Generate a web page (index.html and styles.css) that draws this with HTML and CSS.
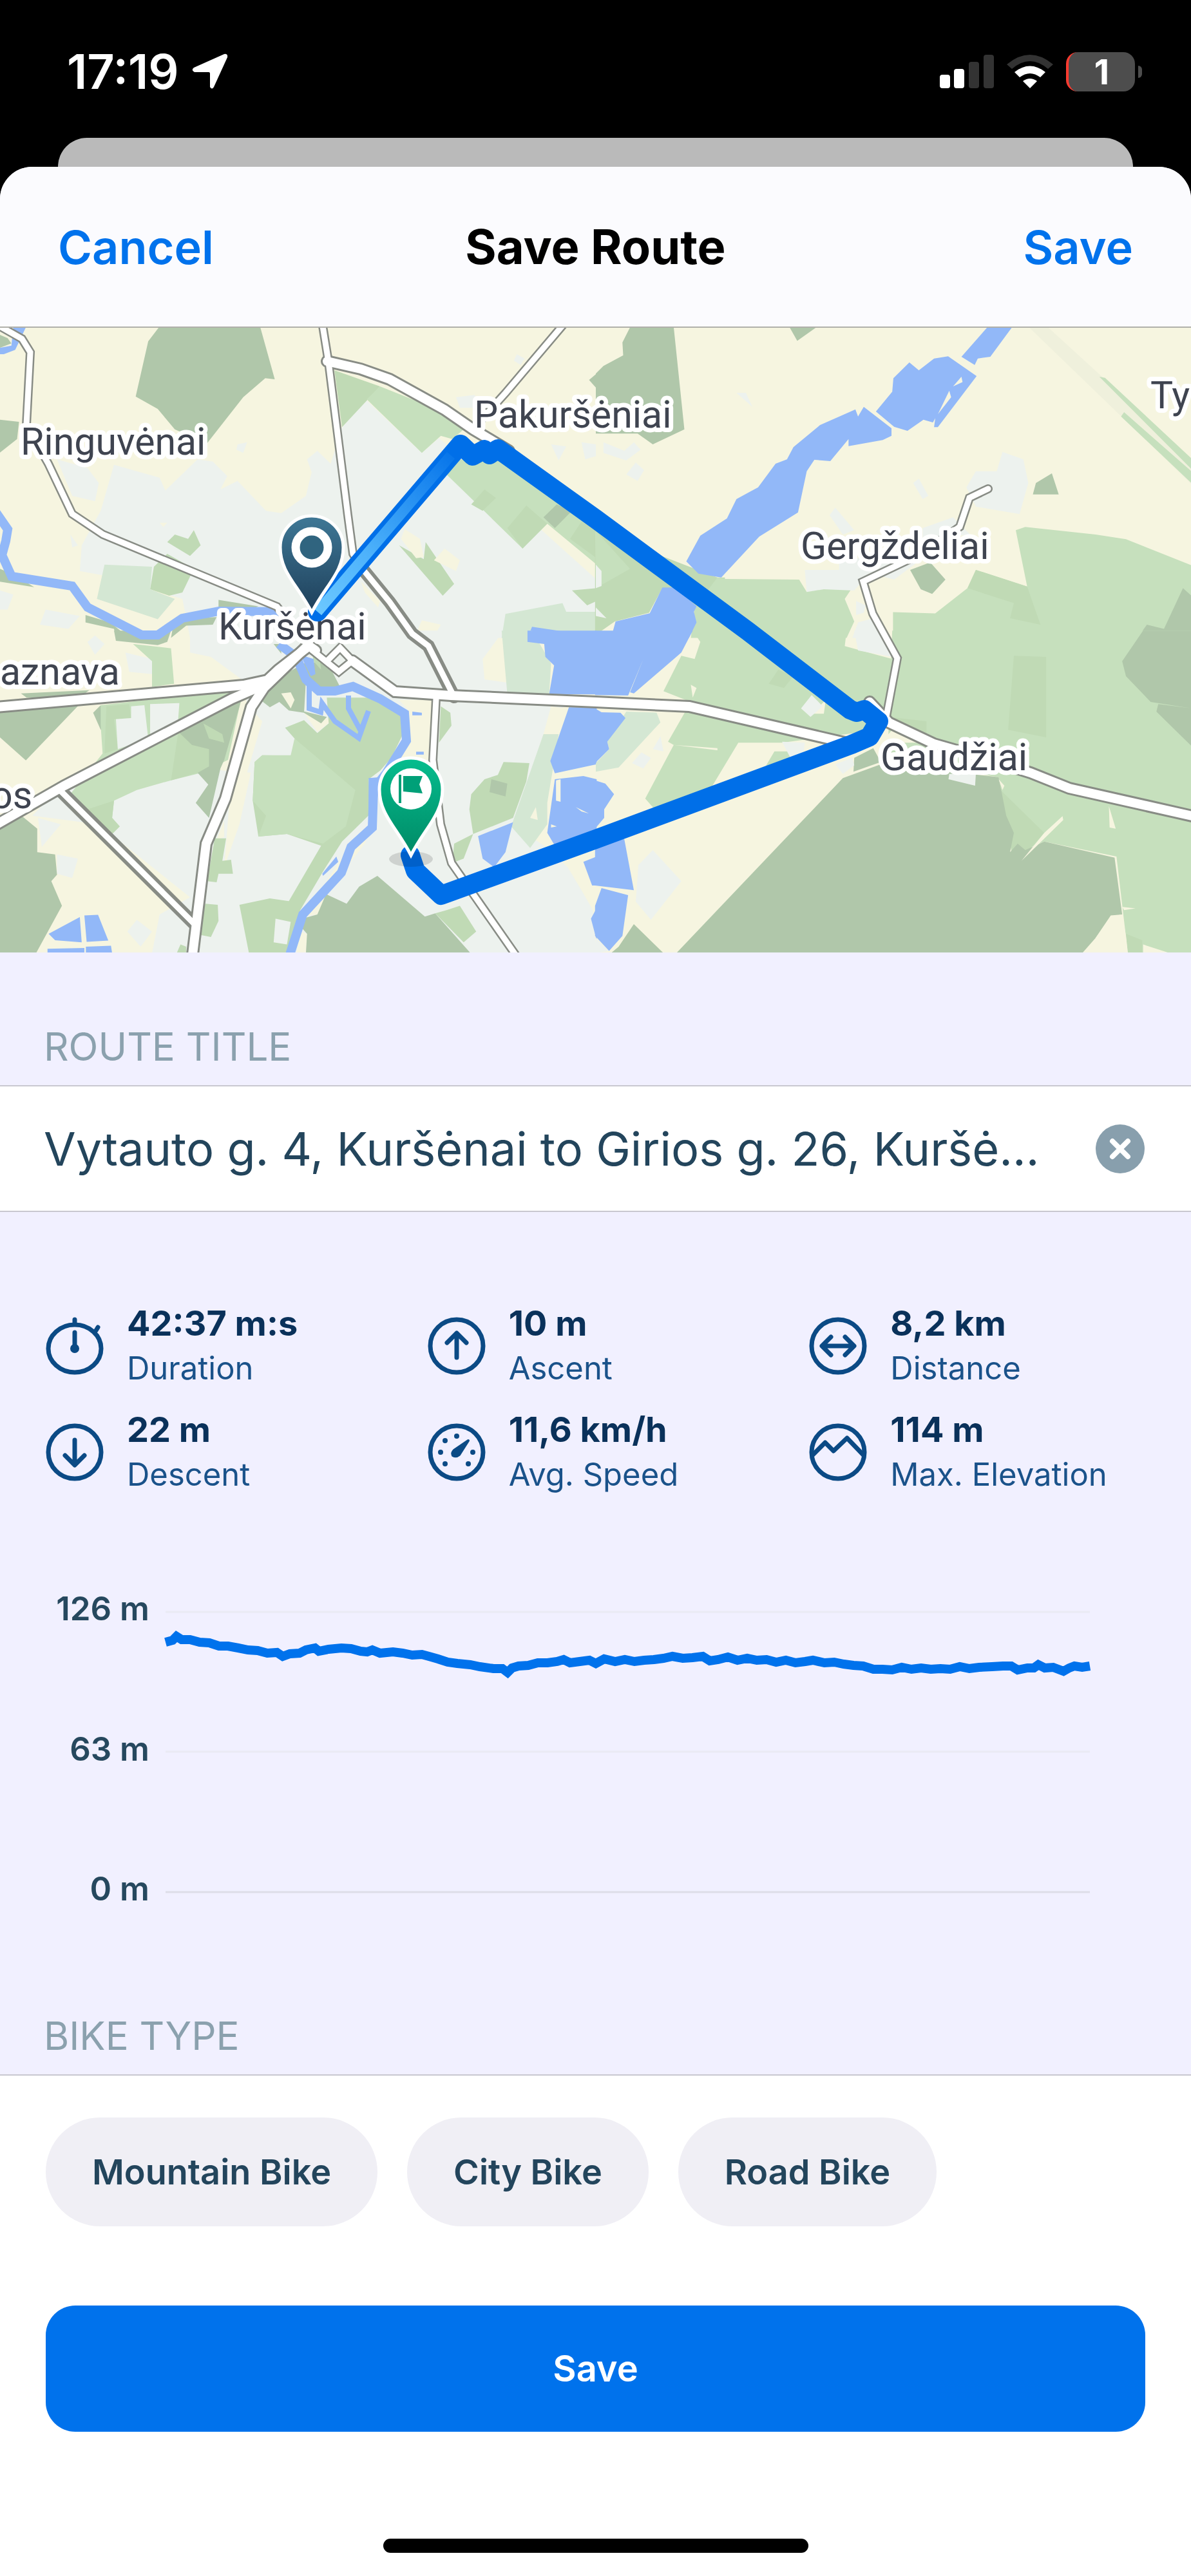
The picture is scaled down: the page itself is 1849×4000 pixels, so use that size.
FILE: index.html
```html
<!DOCTYPE html>
<html lang="en">
<head>
    <meta charset="UTF-8">
    <meta name="viewport" content="width=device-width, initial-scale=1.0">
    <title>Save Route</title>
    <link rel="stylesheet" href="styles.css">
</head>
<body>

    <div class="status-bar">
        <div class="status-left">
            <span class="clock">17:19</span>
            <svg class="location-icon" viewBox="0 0 56 56" width="56" height="56"><path d="M50 1 Q56 0 55 6 L34 52 Q31 57 28 52 V31 Q28 29 26 29 H4 Q-2 26 3 22 Z" fill="#fff"/></svg>
        </div>
        <div class="status-right">
            <svg viewBox="0 0 84 52" width="84" height="52">
                <rect x="0" y="31" width="16" height="21" rx="4" fill="#fff"/>
                <rect x="22" y="22" width="16" height="30" rx="4" fill="#fff"/>
                <rect x="45" y="11" width="16" height="41" rx="4" fill="#333"/>
                <rect x="68" y="0" width="16" height="52" rx="4" fill="#333"/>
            </svg>
            <svg viewBox="0 0 72 52" width="72" height="52">
                <path d="M0 15 Q36 -15 72 15 L64 22 Q36 -2 8 22 Z" fill="#333"/>
                <path d="M12 27 Q36 8 60 27 L52 35 Q36 23 20 35 Z" fill="#fff"/>
                <path d="M25 41 Q36 33 47 41 L36 52 Z" fill="#fff"/>
            </svg>
            <div class="battery"><span class="battery-level">1</span></div>
        </div>
    </div>

    <div class="back-sheet"></div>

    <div class="sheet">
        <header class="nav">
            <button class="nav-button" type="button">Cancel</button>
            <h1>Save Route</h1>
            <button class="nav-button nav-save" type="button">Save</button>
        </header>

        <svg class="map" viewBox="0 509 1849 970" role="img" aria-label="Route map">
            <defs>
                <linearGradient id="leg" gradientUnits="userSpaceOnUse" x1="493" y1="950" x2="715" y2="690">
                    <stop offset="0" stop-color="#6cc8ff"/>
                    <stop offset=".35" stop-color="#4db2fb"/>
                    <stop offset="1" stop-color="#006fe8"/>
                </linearGradient>
                <linearGradient id="startPin" x1="0" y1="0" x2="0" y2="1">
                    <stop offset="0" stop-color="#3f7896"/>
                    <stop offset="1" stop-color="#1e3f5a"/>
                </linearGradient>
                <linearGradient id="endPin" x1="0" y1="0" x2="0" y2="1">
                    <stop offset="0" stop-color="#05bd8e"/>
                    <stop offset="1" stop-color="#008a66"/>
                </linearGradient>
            </defs>
            <rect class="land" x="0" y="509" width="1849" height="970"/>

            <!-- north west -->
            <g transform="translate(0 500) scale(.59 .3333)">
                <path class="urban" d="M300 665 420 725 435 785 520 640 560 650 598 718 580 780 625 740 700 880 740 890 805 810 820 700 808 640 835 600 870 660 900 490 965 365 1110 610 1155 540 1570 1200V1472H500L480 1290 270 1180 210 1160 215 1040 265 880Z"/>
                <path class="urban" d="M150 640 230 680 260 750 250 835 190 810ZM625 570 650 560 640 610 622 595ZM1200 350 1250 340V400H1210ZM1360 150 1380 170 1370 200 1352 180ZM1450 570 1490 580 1470 645ZM1530 560 1568 570V625L1540 640ZM185 990 205 1040 190 1050ZM120 1340 210 1370 180 1430 105 1410ZM0 1250 35 1270 20 1340H0Z"/>
                <path class="forest" d="M418 25H685L723 267 698 262 640 350 545 565 460 500 415 405 357 347 390 90ZM0 455 50 465 45 545 0 608ZM0 60 20 75 30 100 0 120ZM1570 240 1550 270 1570 310ZM0 1150 40 1180 90 1235 0 1210ZM575 1295 680 1325 650 1345H575ZM225 1365 290 1400 340 1472H305L300 1430 225 1400ZM450 1472 455 1420 480 1380 570 1375 560 1410 490 1415Z"/>
                <path class="field" d="M880 225 1000 300 900 490ZM440 1025 460 990 495 1010 510 970 528 1040 500 1090ZM405 1140 440 1080 510 1150 480 1260 445 1275 395 1245ZM1050 1040 1115 1105 1120 1025 1195 1220 1165 1275ZM1505 1250 1570 1240V1300L1545 1320Z"/>
                <path class="meadow" d="M1000 300 1240 470 1190 545 1160 530 1110 610 965 360ZM1175 710 1210 640 1310 640 1570 970V1130L1440 940 1375 1055Z"/>
                <path class="field" d="M1335 960 1385 855 1440 940 1375 1055ZM1240 850 1275 780 1305 820 1270 880ZM1500 1010 1530 930 1570 970V1100Z"/>
                <path class="forest" d="M1430 910 1465 850 1505 880 1460 960Z"/>
                <path class="park" d="M275 1130 400 1140 395 1245 460 1290 415 1385 255 1290ZM1330 1360 1480 1310 1490 1350 1570 1350V1472H1320Z"/>
                <path class="land" d="M1065 965 1105 1010 1115 1095 1095 1100 1055 1010ZM1170 1055 1210 1110 1200 1160 1142 1110ZM950 1210 1000 1300 995 1330 960 1260ZM420 935 440 935 430 955ZM1110 1390 1160 1410 1140 1472H1090ZM465 1350 560 1360 500 1385Z"/>
                <path class="water" d="M0 120 30 110 35 25H68L40 130 10 150H0ZM1400 1420 1570 1465V1472H1388Z"/>
            </g>

            <!-- north east -->
            <g transform="translate(925 500) scale(.59 .3333)">
                <path class="runway" d="M1140 25H1190L1570 640V760Z"/>
                <path class="urban" d="M1070 605 1125 640 1138 750 1115 895 1000 860 975 770 1000 695 1055 695ZM550 1155H640V1100H860L785 1200 720 1170 680 1250 555 1260ZM630 865 680 970 650 990 615 900ZM850 730 875 810 860 825 835 750ZM370 330 395 330 412 395ZM860 960 940 910 985 990 860 1010ZM20 560 75 600 100 560 118 595 80 645 20 610ZM105 655 127 690 110 740 80 710ZM675 1472 690 1400 730 1380 770 1472ZM685 1300 710 1320 705 1355 685 1365Z"/>
                <path class="forest" d="M90 25H205L233 500 150 570 110 520H0V240L20 205 72 155 70 95ZM510 25H580L530 88ZM1200 705 1218 803H1150L1158 750ZM827 1155 880 1120 920 1200 885 1267 855 1245Z"/>
                <path class="field" d="M-2 970 320 1190H340L330 1300 260 1330 175 1240 140 1355 50 1395-2 1460Z"/>
                <path class="meadow" d="M1325 255 1340 260 1570 640V690ZM1382 440 1390 420 1570 700V755ZM-2 970 90 1150 0 1240ZM340 1197 535 1200 555 1258 600 1245 670 1250 655 1290 680 1395 660 1472H250L260 1330 320 1190ZM782 1352 893 1358 978 1240 1000 1155 1135 1232 1105 970 1130 955 1315 990 1395 1012 1570 1135V1472H782Z"/>
                <path class="field" d="M1000 1155 1135 1232 1170 1410 1090 1380 1100 1310 978 1240Z"/>
                <path class="forest" d="M1545 1240 1570 1280V1472H1425L1450 1410 1495 1430Z"/>
                <path class="urban" d="M0 1130 15 1160V1230L0 1240ZM0 1330 28 1380 0 1370Z"/>
                <path class="water" d="M1030 25H1095L1038 162 1005 170 997 200 962 162ZM737 417 780 325 783 262 825 188 850 225 890 170 927 160 1002 252 900 490H890L895 425 930 330 887 468 862 455 820 507 785 488ZM705 395 778 495V530L755 550 665 578V545L617 648 575 642 555 695 532 887 430 1000 330 1190 270 1172 238 1115 275 995 345 915 370 825 427 770 473 660 503 640 520 583 590 480 683 407 690 440ZM175 1237H210L265 1325 258 1350 265 1400 245 1472H-2L45 1440 52 1395 142 1357Z"/>
                <path class="land" d="M962 255 965 280 940 300ZM930 320 935 350 900 430Z"/>
            </g>

            <!-- south west -->
            <g transform="translate(0 980) scale(.59 .3333)">
                <path class="urban" d="M500-2H1325L1270 130 1275 225 1335 240V300L1500 310 1430 480 1350 900 1440 1010 1500 1110 1560 1300 1570 1500H400L420 1320 500 1240 260 900 130 870 85 860 150 740 300 600 650 660 690 420 650 340 640 230 555 120 500 100ZM330 100 400 130V200L340 190ZM230 50 250 20 275 60 250 110ZM150 1040 205 1060 190 1150 150 1130ZM100 870 160 900 110 1005ZM360 1345 400 1400 370 1470 335 1400Z"/>
                <path class="land" d="M1050 320H1150L1140 600H1050L1080 500 1075 370ZM930 970 975 900 960 990 860 1220 835 1320 800 1330ZM610 650 660 660 630 900 590 1100ZM590 880V960L570 970ZM790 1400 808 1410 805 1500H780ZM800 380 835 470 870 420 855 400Z"/>
                <path class="forest" d="M0 370 210 340 68 602 0 495ZM55 290 235 275 200 320 70 310ZM0 880 60 865 98 920V1030L145 1040 150 1135 135 1165 163 1280 95 1500H0ZM300-2H450L440 50 415 65 305 45ZM245 380 265 345 285 430 265 460Z"/>
                <path class="meadow" d="M350 60 450 80 458 245 400 260 400 140ZM265 345 640 270 600 600 530 660 450 695 360 740 300 790 295 870 315 910 295 945 180 770 270 570 265 440Z"/>
                <path class="field" d="M470 460 560 330 550 630 520 660 450 695ZM280 350 340 340 345 405 300 410 310 550 275 570ZM230 830 300 790 295 870 315 910 295 945 260 880Z"/>
                <path class="urban" d="M305 410 345 405 345 350 380 345 390 500 310 550ZM395 340 472 335 468 430 395 490Z"/>
                <path class="forest" d="M560 330 640 290 590 600 580 640 550 870 515 800 548 715 520 660 550 630V550L505 530 470 470 530 400ZM700 250 800 150 860 140 895 260 860 290 805 230 800 380 760 370 735 330 710 355 685 320ZM790 370 860 400 845 430ZM720 60 740 60 740 105Z"/>
                <path class="field" d="M535 430 585 480 590 520 550 500ZM820 90 840 110 845 180 825 140ZM800 415 835 475 865 430 860 310H1000L1055 390 1060 480 1030 590 1000 650 970 690 975 850 900 980 850 1120 790 1300 760 1500H655L630 1275 710 1245 760 1258 845 1000 755 945 680 957 665 790 670 610 690 578 765 580 780 510 750 450Z"/>
                <path class="meadow" d="M775 500 935 740 910 910 850 990 755 945 680 957 700 860 665 790 670 610 690 578H765Z"/>
                <path class="land" d="M740 290 765 285 775 320 765 360Z"/>
                <path class="urban" d="M725 1340 765 1355 755 1460 720 1450Z"/>
                <path class="field" d="M565 965H595L585 1070 608 1065 613 1130 575 1130 570 1170 545 1165ZM540 1270 573 1275 575 1350 555 1425 525 1415ZM475 1460 490 1470V1500H465ZM1145 1315 1175 1300 1210 1280 1253 1400 1220 1450ZM1325 610 1393 615 1385 700 1350 870 1245 945 1220 1060 1190 1080 1195 990 1245 945 1235 830 1240 760 1275 690 1310 670ZM1160 350 1185 380 1188 440 1155 520Z"/>
                <path class="forest" d="M993 1140 1118 1330 1145 1315 1238 1500H805L808 1410 790 1375 795 1340 835 1320 858 1225 912 1270 945 1190ZM1293 690 1335 710 1330 770 1288 750Z"/>
                <path class="park" d="M1430 480H1470L1440 800 1440 900 1395 1010 1345 910ZM1320-2H1400L1450 150 1445 295H1335Z"/>
                <path class="land" d="M1410 820 1415 880 1395 870ZM1490 360 1455 480 1430 480 1450 350ZM1460 1000 1535 975 1535 1120 1558 1290Z"/>
                <path class="water" d="M1258 955 1350 890 1330 1030 1300 1100 1270 1060ZM1388-2H1570V295L1445 293 1458 160 1435 120 1432 60 1388 50ZM1497 355H1570V620L1460 662 1448 605ZM1460 690 1535 675 1570 690V960L1460 1000 1440 940ZM1535 1075 1570 1050V1185H1558ZM1570 1290V1440L1555 1340ZM128 1410 210 1332 215 1450 145 1440ZM222 1325 258 1322 285 1442 228 1448ZM125 1480 222 1476V1500H125ZM226 1470 292 1466 295 1500H226ZM970 685 1000 680 990 820 970 900ZM790 110 825 130 830 200 818 210ZM848 1130 885 1050 890 1075 850 1140ZM1085 375 1110 380V392H1085ZM1095 562H1115V575H1095Z"/>
                <path class="land" d="M1463 695 1475 690 1475 795 1463 790ZM1450 900 1465 910 1450 915ZM1515 820 1550 850 1530 840Z"/>
            </g>

            <!-- south east -->
            <g transform="translate(925 980) scale(.59 .3333)">
                <path class="meadow" d="M255-2H660L655 70 780 130 760 400 700 470 490 520H375L300 740 155 830 130 780 205 530 190 515 250 330 178 280 225 115 260 130 275 50ZM780-2H1570V1500H1400L1370 1050 1180 980 1100 1040 1075 830 1060 680 770 600V400ZM470 560 510 560 530 600 440 650Z"/>
                <path class="field" d="M1100 115 1185 120V495L1085 460ZM770 400 870 420V500L780 470ZM480 180 520 210 495 265 455 245ZM1065 740 1180 940 1120 1060 1095 1040ZM1395 1410 1438 1440V1500H1400Z"/>
                <path class="forest" d="M1440-2H1570V360L1460 330 1395 210 1385 140ZM1480 340 1570 360V540L1475 375ZM650 685 750 620 1060 680 1080 860 1100 940 1090 1030 1110 990 1130 1020 1180 980 1365 1055 1385 1320 1355 1330 1315 1430 1280 1500H212ZM680 590 730 545 750 610 678 655ZM100 1365 178 1500H40L60 1470Z"/>
                <path class="land" d="M1385 1320 1395 1420 1400 1500H1320L1315 1430 1355 1325ZM1440 1460 1510 1500H1440ZM1228 862 1230 880 1120 1070 1180 940ZM1350 815 1368 920 1352 915ZM1060 690 1075 720 1070 740ZM780 460 870 520 750 520ZM250 250 265 265 255 310ZM605 320 600 385 570 385 540 440ZM205 530 320 545 320 555ZM1385 1285 1420 1292 1390 1300Z"/>
                <path class="urban" d="M930 665H1000L998 720 928 690ZM540 360 568 298 597 350 565 400ZM490 515 550 520 545 580 512 590ZM150 1020 225 1165 145 1345 105 1260 112 1090ZM680-2H755L780 120 690 90ZM120 565 145 590 125 640 95 615ZM170 490 178 560 150 550ZM630 620 675 590 680 625 650 665ZM0 1430 35 1490 0 1500Z"/>
                <path class="park" d="M80 375 160 380 170 425 60 635 0 655V615L35 550 30 515Z"/>
                <path class="water" d="M-2-2H255L225 100 100 290 90 285 125 130 85 300-2 298ZM-2 360 15 378 65 380 78 405 30 515 35 550-2 615ZM-2 695 25 710 48 760 22 830V870L-2 920ZM-2 940 75 970 100 1207-2 1185ZM15 1197 85 1230 70 1420 35 1490-2 1420V1280Z"/>
            </g>

            <!-- river -->
            <path class="river" d="M-6 796 12 822 9 840 3 862 18 895 112 910 136 943 220 986H245L283 960 340 949 440 950"/>
            <path class="river" d="M433 1000 460 1020 475 1055 495 1073H520L548 1066 590 1085 628 1108 631 1150 600 1200 580 1225 578 1285 545 1315 530 1355 470 1420 450 1482"/>
            <path class="river thin" d="M480 1060V1100L498 1106 500 1092 520 1120 557 1146 572 1104 560 1135 541 1100V1080"/>

            <!-- roads, casing first -->
            <g class="road-case">
                <path d="M-5 504 34 526 47 547 41 660 75 720 112 798 160 830 430 942 475 998"/>
                <path d="M500 500 510 562 540 800 548 860 560 880 605 935 640 984 665 1003 705 1082"/>
                <path d="M878 500 785 610 740 660"/>
                <path d="M677 1085 672 1180 684 1280 701 1340 800 1482"/>
                <path d="M1534 759 1505 773 1490 818 1430 860 1340 903 1355 953 1393 1022 1375 1118"/>
                <path d="M485 1010 526 1043 547 1026 528 1006 508 1026"/>
            </g>
            <g class="road-case heavy">
                <path d="M560 880 605 935 640 984 665 1003 705 1082"/>
                <path d="M92 1226 303 1436"/>
            </g>
            <g class="road-case wide">
                <path d="M508 561 560 573 605 589 690 636 735 667 790 700"/>
                <path d="M-5 1098 378 1064 415 1056 432 1040 480 1003 490 1010"/>
                <path d="M-5 1280 100 1220 360 1085 395 1070 415 1060"/>
                <path d="M475 1005 410 1068 390 1098 350 1240 320 1310 299 1482"/>
                <path d="M547 1026 613 1074 700 1080 925 1090 1070 1097 1320 1155"/>
                <path d="M1350 1090 1380 1122 1450 1155 1530 1178 1600 1200 1660 1224 1855 1268"/>
            </g>
            <g class="road">
                <path d="M-5 504 34 526 47 547 41 660 75 720 112 798 160 830 430 942 475 998"/>
                <path d="M500 500 510 562 540 800 548 860 560 880 605 935 640 984 665 1003 705 1082"/>
                <path d="M878 500 785 610 740 660"/>
                <path d="M92 1226 303 1436"/>
                <path d="M677 1085 672 1180 684 1280 701 1340 800 1482"/>
                <path d="M1534 759 1505 773 1490 818 1430 860 1340 903 1355 953 1393 1022 1375 1118"/>
                <path d="M485 1010 526 1043 547 1026 528 1006 508 1026"/>
            </g>
            <g class="road wide">
                <path d="M508 561 560 573 605 589 690 636 735 667 790 700"/>
                <path d="M-5 1098 378 1064 415 1056 432 1040 480 1003 490 1010"/>
                <path d="M-5 1280 100 1220 360 1085 395 1070 415 1060"/>
                <path d="M475 1005 410 1068 390 1098 350 1240 320 1310 299 1482"/>
                <path d="M547 1026 613 1074 700 1080 925 1090 1070 1097 1320 1155"/>
                <path d="M1350 1090 1380 1122 1450 1155 1530 1178 1600 1200 1660 1224 1855 1268"/>
            </g>

            <g class="place">
                <text x="32" y="706">Ringuvėnai</text>
                <text x="736" y="664">Pakuršėniai</text>
                <text x="1243" y="868">Gergždeliai</text>
                <text x="1367" y="1196">Gaudžiai</text>
                <text x="339" y="993">Kuršėnai</text>
                <text x="1786" y="634">Ty</text>
                <text x="0" y="1063">aznava</text>
                <text x="-14" y="1255">os</text>
            </g>

            <!-- route -->
            <path class="route" d="M493 950 715 690 734 708 752 698 760 706 773 697 925 806 1161 980 1320 1102 1330 1106 1342 1102 1364 1120 1350 1144 1322 1156 925 1303 685 1390 645 1352 637 1328"/>
            <path d="M493 950 700 707" stroke="url(#leg)" stroke-width="16"/>

            <path d="M484 951C462 908 435 889 435 850A49 49 0 0 1 533 850C533 889 506 908 484 951Z" fill="url(#startPin)" stroke="#fff" stroke-width="5"/>
            <circle cx="484" cy="850" r="25" fill="#30647f" stroke="#fff" stroke-width="13"/>

            <ellipse cx="638" cy="1334" rx="34" ry="12" fill="#000" opacity=".13"/>
            <path d="M638 1328C616 1285 589 1265 589 1226A49 49 0 0 1 687 1226C687 1265 660 1285 638 1328Z" fill="url(#endPin)" stroke="#fff" stroke-width="5"/>
            <circle cx="638" cy="1225" r="32" fill="#fff"/>
            <path d="M619 1203H623V1247H619ZM626 1205H656L651 1218 656 1232 626 1229Z" fill="#00a078"/>
        </svg>

        <form class="route-form">
            <label class="section-title" for="routeTitle">ROUTE TITLE</label>
            <div class="title-row">
                <input type="text" id="routeTitle" value="Vytauto g. 4, Kuršėnai to Girios g. 26, Kuršėnai">
                <button class="clear-button" type="button" aria-label="Clear title">
                    <svg viewBox="0 0 76 76" width="76" height="76"><circle cx="38" cy="38" r="38" fill="#889fad"/><path d="M26 26 50 50M50 26 26 50" stroke="#fff" stroke-width="8" stroke-linecap="round"/></svg>
                </button>
            </div>

            <div class="stats">
                <div class="stat">
                    <svg class="stat-icon" viewBox="0 0 90 90"><ellipse cx="45" cy="49" rx="41" ry="37"/><path d="M45 4V9M78 21 81 16M45 24V46"/><circle class="solid" cx="45" cy="49" r="5"/></svg>
                    <div><strong>42:37 m:s</strong><span>Duration</span></div>
                </div>
                <div class="stat">
                    <svg class="stat-icon" viewBox="0 0 90 90"><circle cx="45" cy="45" r="41"/><path d="M45 63V26M30 40 45 25 60 40"/></svg>
                    <div><strong>10 m</strong><span>Ascent</span></div>
                </div>
                <div class="stat">
                    <svg class="stat-icon" viewBox="0 0 90 90"><circle cx="45" cy="45" r="41"/><path d="M21 45H69M34 31 20 45 34 59M56 31 70 45 56 59"/></svg>
                    <div><strong>8,2 km</strong><span>Distance</span></div>
                </div>
                <div class="stat">
                    <svg class="stat-icon" viewBox="0 0 90 90"><circle cx="45" cy="45" r="41"/><path d="M45 26V64M30 50 45 65 60 50"/></svg>
                    <div><strong>22 m</strong><span>Descent</span></div>
                </div>
                <div class="stat">
                    <svg class="stat-icon" viewBox="0 0 90 90"><circle cx="45" cy="45" r="41"/><path class="solid" d="M63 27 49 49Q44 53 39 50 37 46 41 42Z"/><g class="solid"><circle cx="45" cy="20" r="2"/><circle cx="27" cy="27" r="2"/><circle cx="20" cy="45" r="2"/><circle cx="27" cy="63" r="2"/><circle cx="63" cy="63" r="2"/><circle cx="70" cy="45" r="2"/></g></svg>
                    <div><strong>11,6 km/h</strong><span>Avg. Speed</span></div>
                </div>
                <div class="stat">
                    <svg class="stat-icon" viewBox="0 0 90 90"><circle cx="45" cy="45" r="41"/><path d="M5 50 25 30 38 43 59 23 85 50"/></svg>
                    <div><strong>114 m</strong><span>Max. Elevation</span></div>
                </div>
            </div>

            <svg class="chart" viewBox="0 0 1849 560" role="img" aria-label="Elevation">
                <path d="M257 63H1692M257 280H1692" stroke="#eaeaf4" stroke-width="3"/>
                <path d="M257 498H1692" stroke="#dddde8" stroke-width="3"/>
                <g class="chart-label">
                    <text x="232" y="76">126 m</text>
                    <text x="232" y="294">63 m</text>
                    <text x="232" y="511">0 m</text>
                </g>
                <polyline class="elevation" points="257,110 268,107 274,101 282,106 295,106 310,110 325,111 340,116 354,116 370,119 385,122 400,123 415,127 430,126 439,132 450,128 465,127 475,122 489,119 495,124 510,121 530,119 545,120 560,124 570,125 578,122 590,127 610,125 625,127 640,130 655,129 666,132 680,136 695,141 710,143 730,145 745,148 766,151 780,151 788,157 795,150 805,147 820,146 835,142 850,142 865,140 875,137 885,142 900,140 915,138 925,143 938,136 955,140 970,137 985,140 1000,138 1015,137 1030,135 1044,132 1060,135 1075,134 1091,132 1102,139 1115,137 1130,133 1145,138 1160,135 1175,138 1190,137 1205,141 1220,138 1235,142 1250,140 1262,138 1280,142 1295,141 1310,144 1325,146 1340,147 1356,152 1370,152 1385,153 1400,149 1415,152 1430,150 1445,152 1460,151 1475,152 1490,148 1505,151 1520,149 1540,148 1557,147 1570,147 1580,153 1595,150 1605,150 1612,145 1622,150 1635,149 1651,155 1660,150 1668,147 1680,149 1692,147"/>
            </svg>

            <h2 class="section-title bike-title">BIKE TYPE</h2>
            <div class="bottom">
                <div class="chips">
                    <button type="button">Mountain Bike</button>
                    <button type="button">City Bike</button>
                    <button type="button">Road Bike</button>
                </div>
                <button class="save-button" type="submit">Save</button>
                <div class="home-indicator"></div>
            </div>
        </form>
    </div>

</body>
</html>
```
FILE: styles.css
```css
* {
    box-sizing: border-box;
}

body {
    font-family: Inter, "Liberation Sans", sans-serif;
    background-color: #000;
    margin: 0;
}

button {
    font-family: inherit;
    border: none;
    padding: 0;
    cursor: pointer;
}

svg {
    display: block;
    fill: none;
}

.status-bar {
    height: 214px;
    padding: 8px 76px 0 104px;
    display: flex;
    justify-content: space-between;
    align-items: center;
    color: #fff;
}

.status-left,
.status-right {
    display: flex;
    align-items: center;
    gap: 20px;
}

.clock {
    font-size: 74px;
    font-weight: 600;
}

.battery {
    position: relative;
    width: 107px;
    height: 61px;
    margin-right: 11px;
    border-radius: 18px;
    border-left: 4px solid #ff3b30;
    background-color: #4d4d4d;
    display: flex;
    align-items: center;
    justify-content: center;
}

.battery::after {
    content: "";
    position: absolute;
    right: -11px;
    top: 21px;
    width: 6px;
    height: 19px;
    border-radius: 0 6px 6px 0;
    background-color: #4d4d4d;
}

.battery-level {
    font-size: 54px;
    font-weight: 700;
}

.back-sheet {
    height: 45px;
    margin: 0 90px;
    border-radius: 45px 45px 0 0;
    background-color: #bababa;
}

.sheet {
    background-color: #f1f0ff;
    border-radius: 50px 50px 0 0;
    overflow: hidden;
}

.nav {
    height: 250px;
    padding: 0 90px;
    display: grid;
    grid-template-columns: 1fr auto 1fr;
    align-items: center;
    background-color: #fbfbfe;
    border-bottom: 2px solid #b0b0aa;
}

.nav h1 {
    margin: 0;
    font-size: 74px;
    font-weight: 700;
    color: #000;
}

.nav-button {
    justify-self: start;
    background: none;
    font-size: 72px;
    font-weight: 600;
    color: #0072ec;
}

.nav-save {
    justify-self: end;
}

/* map */
.map {
    width: 100%;
}

.land { fill: #f6f5e0; }
.runway { fill: #eff0dc; }
.urban { fill: #edf2ee; }
.forest { fill: #b0c7aa; }
.meadow { fill: #c6e0bd; }
.field { fill: #c0dab5; }
.park { fill: #d4e7d3; }
.water { fill: #92b8f8; }

.river {
    stroke: #92b8f8;
    stroke-width: 14;
}

.river.thin {
    stroke-width: 8;
}

.road-case {
    stroke: #888c85;
    stroke-width: 14;
    stroke-linecap: round;
}

.road-case.wide,
.road-case.heavy {
    stroke-width: 20;
}

.road {
    stroke: #fff;
    stroke-width: 9;
    stroke-linecap: round;
}

.road.wide {
    stroke-width: 14;
}

.place {
    font-family: Roboto, "Liberation Sans", sans-serif;
    font-size: 59px;
    fill: #3f4450;
    stroke: #fff;
    stroke-width: 14;
    stroke-linejoin: round;
    paint-order: stroke;
}

.route {
    stroke: #006fe8;
    stroke-width: 30;
    stroke-linejoin: round;
    stroke-linecap: round;
}

/* form */
.section-title {
    display: block;
    margin: 0;
    padding: 106px 68px 20px;
    font-size: 60px;
    line-height: 80px;
    font-weight: 400;
    color: #8ba1ae;
}

.bike-title {
    padding-top: 121px;
}

.title-row {
    display: flex;
    align-items: center;
    justify-content: space-between;
    gap: 80px;
    height: 197px;
    padding: 0 72px 0 68px;
    background-color: #fff;
    border-top: 2px solid #c8c8d0;
    border-bottom: 2px solid #c8c8d0;
}

.title-row input {
    flex: 1;
    min-width: 0;
    height: 120px;
    padding: 0;
    border: none;
    outline: none;
    background: none;
    font-family: inherit;
    font-size: 72px;
    color: #23455c;
    text-overflow: ellipsis;
}

.clear-button {
    background: none;
}

.stats {
    display: grid;
    grid-template-columns: repeat(3, 1fr);
    row-gap: 25px;
    padding: 138px 0 115px 71px;
}

.stat {
    display: flex;
    align-items: center;
    gap: 36px;
}

.stat-icon {
    width: 90px;
    height: 90px;
    stroke: #0b4a85;
    stroke-width: 7;
    stroke-linecap: round;
    stroke-linejoin: round;
}

.stat-icon .solid {
    fill: #0b4a85;
    stroke-width: 4;
}

.stat strong,
.stat span {
    display: block;
    line-height: 70px;
    white-space: nowrap;
}

.stat strong {
    font-size: 54px;
    font-weight: 700;
    color: #0a315a;
}

.stat span {
    font-size: 49px;
    color: #1a528a;
}

.chart {
    width: 100%;
}

.chart-label {
    font-size: 51px;
    font-weight: 600;
    fill: #26485e;
    text-anchor: end;
}

.elevation {
    stroke: #0072ec;
    stroke-width: 14;
}

.bottom {
    padding: 65px 71px 36px;
    background-color: #fff;
    border-top: 2px solid #c8c8d0;
}

.chips {
    display: flex;
    gap: 46px;
    margin-bottom: 123px;
}

.chips button {
    height: 169px;
    padding: 0 72px;
    border-radius: 85px;
    background-color: #f0eff5;
    font-size: 54px;
    font-weight: 600;
    color: #23455c;
}

.save-button {
    display: block;
    width: 100%;
    height: 196px;
    border-radius: 46px;
    background-color: #0072ec;
    font-size: 56px;
    font-weight: 600;
    color: #fff;
}

.home-indicator {
    width: 660px;
    max-width: 80%;
    height: 22px;
    margin: 166px auto 0;
    border-radius: 11px;
    background-color: #000;
}
```
